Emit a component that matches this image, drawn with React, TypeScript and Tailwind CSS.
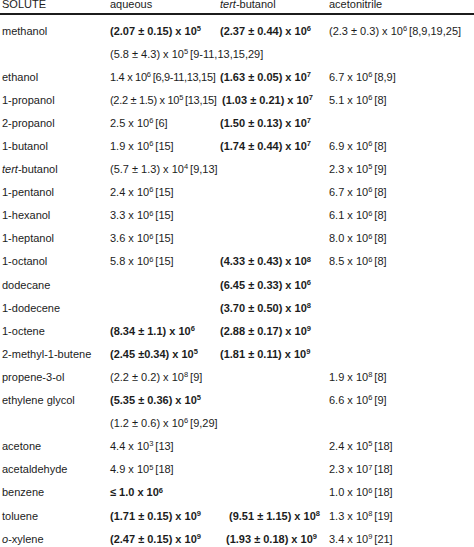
import type { ReactNode } from "react";

type ValProps = {
  m: string;
  e: string;
  r?: string;
  b?: boolean;
};

const Val = ({ m, e, r, b }: ValProps) => (
  <span className={b ? "font-bold" : ""}>
    {m} x 10
    <sup className="text-[7.5px]">{e}</sup>
    {r ? <span className="ml-[2px]">{r}</span> : null}
  </span>
);

type Row = {
  solute: ReactNode;
  aq?: ReactNode;
  tb?: ReactNode;
  an?: ReactNode;
  tbShift?: string;
  aqTight?: boolean;
};

const rows: Row[] = [
  {
    solute: "methanol",
    aq: <Val m="(2.07 ± 0.15)" e="5" b />,
    tb: <Val m="(2.37 ± 0.44)" e="6" b />,
    an: <Val m="(2.3 ± 0.3)" e="6" r="[8,9,19,25]" />,
  },
  { solute: "", aq: <Val m="(5.8 ± 4.3)" e="5" r="[9-11,13,15,29]" /> },
  {
    solute: "ethanol",
    aq: <Val m="1.4" e="6" r="[6,9-11,13,15]" />,
    tb: <Val m="(1.63 ± 0.05)" e="7" b />,
    an: <Val m="6.7" e="6" r="[8,9]" />,
    aqTight: true,
  },
  {
    solute: "1-propanol",
    aq: <Val m="(2.2 ± 1.5)" e="5" r="[13,15]" />,
    tb: <Val m="(1.03 ± 0.21)" e="7" b />,
    an: <Val m="5.1" e="6" r="[8]" />,
    aqTight: true,
    tbShift: "pl-[2px]",
  },
  {
    solute: "2-propanol",
    aq: <Val m="2.5" e="6" r="[6]" />,
    tb: <Val m="(1.50 ± 0.13)" e="7" b />,
  },
  {
    solute: "1-butanol",
    aq: <Val m="1.9" e="6" r="[15]" />,
    tb: <Val m="(1.74 ± 0.44)" e="7" b />,
    an: <Val m="6.9" e="6" r="[8]" />,
  },
  {
    solute: (
      <>
        <i>tert</i>-butanol
      </>
    ),
    aq: <Val m="(5.7 ± 1.3)" e="4" r="[9,13]" />,
    an: <Val m="2.3" e="5" r="[9]" />,
  },
  { solute: "1-pentanol", aq: <Val m="2.4" e="6" r="[15]" />, an: <Val m="6.7" e="6" r="[8]" /> },
  { solute: "1-hexanol", aq: <Val m="3.3" e="6" r="[15]" />, an: <Val m="6.1" e="6" r="[8]" /> },
  { solute: "1-heptanol", aq: <Val m="3.6" e="6" r="[15]" />, an: <Val m="8.0" e="6" r="[8]" /> },
  {
    solute: "1-octanol",
    aq: <Val m="5.8" e="6" r="[15]" />,
    tb: <Val m="(4.33 ± 0.43)" e="8" b />,
    an: <Val m="8.5" e="6" r="[8]" />,
  },
  { solute: "dodecane", tb: <Val m="(6.45 ± 0.33)" e="6" b /> },
  { solute: "1-dodecene", tb: <Val m="(3.70 ± 0.50)" e="8" b /> },
  {
    solute: "1-octene",
    aq: <Val m="(8.34 ± 1.1)" e="6" b />,
    tb: <Val m="(2.88 ± 0.17)" e="9" b />,
  },
  {
    solute: "2-methyl-1-butene",
    aq: <Val m="(2.45 ±0.34)" e="5" b />,
    tb: <Val m="(1.81 ± 0.11)" e="9" b />,
  },
  {
    solute: "propene-3-ol",
    aq: <Val m="(2.2 ± 0.2)" e="8" r="[9]" />,
    an: <Val m="1.9" e="8" r="[8]" />,
  },
  {
    solute: "ethylene glycol",
    aq: <Val m="(5.35 ± 0.36)" e="5" b />,
    an: <Val m="6.6" e="6" r="[9]" />,
  },
  { solute: "", aq: <Val m="(1.2 ± 0.6)" e="6" r="[9,29]" /> },
  { solute: "acetone", aq: <Val m="4.4" e="3" r="[13]" />, an: <Val m="2.4" e="5" r="[18]" /> },
  { solute: "acetaldehyde", aq: <Val m="4.9" e="5" r="[18]" />, an: <Val m="2.3" e="7" r="[18]" /> },
  { solute: "benzene", aq: <Val m="≤ 1.0" e="6" b />, an: <Val m="1.0" e="6" r="[18]" /> },
  {
    solute: "toluene",
    aq: <Val m="(1.71 ± 0.15)" e="9" b />,
    tb: <Val m="(9.51 ± 1.15)" e="8" b />,
    an: <Val m="1.3" e="8" r="[19]" />,
    tbShift: "pl-[9px]",
  },
  {
    solute: (
      <>
        <i>o</i>-xylene
      </>
    ),
    aq: <Val m="(2.47 ± 0.15)" e="9" b />,
    tb: <Val m="(1.93 ± 0.18)" e="9" b />,
    an: <Val m="3.4" e="9" r="[21]" />,
    tbShift: "pl-[6px]",
  },
];

const cols = "grid grid-cols-[108px_110px_109px_1fr]";

export default function App() {
  return (
    <div
      className="min-h-screen bg-white text-[11px] text-[#1c1c1c] pl-[2px] overflow-hidden"
      style={{ fontFamily: '"Liberation Sans", Arial, sans-serif' }}
    >
      <div className={`${cols} -mt-[2px] h-[17px] -ml-[2px] pl-[2px] border-b-2 border-[#1c1c1c] leading-[13px]`}>
        <div>SOLUTE</div>
        <div>aqueous</div>
        <div>
          <i>tert</i>-butanol
        </div>
        <div>acetonitrile</div>
      </div>
      <div className="pt-[4.5px]">
        {rows.map((row, i) => (
          <div key={i} className={`${cols} h-[23.1px] items-center leading-[13px] whitespace-nowrap`}>
            <div>{row.solute}</div>
            <div className={row.aqTight ? "tracking-[-0.3px]" : ""}>{row.aq}</div>
            <div className={row.tbShift ?? ""}>{row.tb}</div>
            <div>{row.an}</div>
          </div>
        ))}
      </div>
    </div>
  );
}
